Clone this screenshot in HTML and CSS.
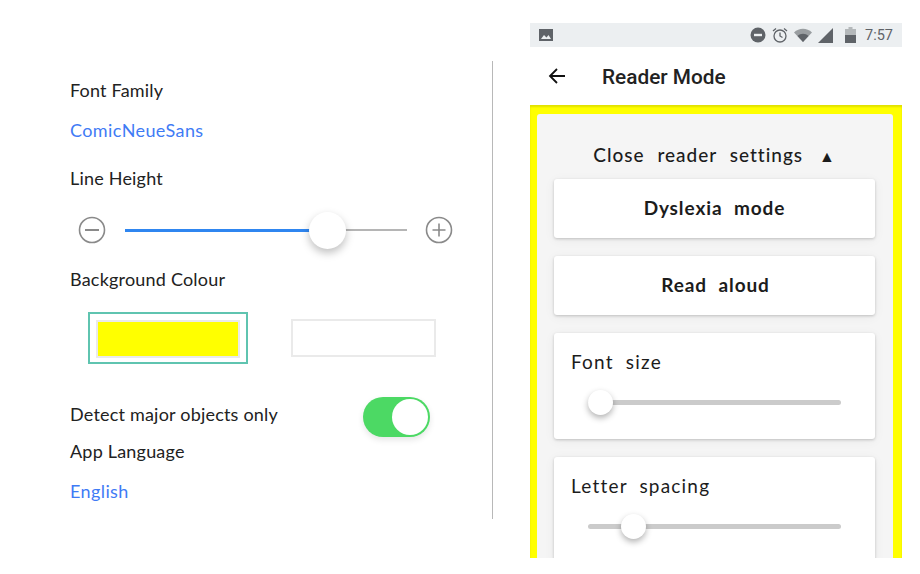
FILE: index.html
```html
<!DOCTYPE html>
<html lang="en">
<head>
    <meta charset="UTF-8">
    <meta name="viewport" content="width=device-width, initial-scale=1.0">
    <title>Reader Mode</title>
    <link rel="stylesheet" href="styles.css">
</head>
<body>

    <div class="settings">
        <div class="label row-font">Font Family</div>
        <div class="link row-font-value">ComicNeueSans</div>
        <div class="label row-line">Line Height</div>
        <div class="line-slider">
            <svg class="round-btn" width="28" height="28" viewBox="0 0 28 28"><circle cx="14" cy="14" r="12.5" fill="none" stroke="#8a8a8a" stroke-width="1.6"/><path d="M7 14h14" stroke="#8a8a8a" stroke-width="2"/></svg>
            <div class="thin-track">
                <div class="thin-fill"></div>
                <div class="thin-thumb"></div>
            </div>
            <svg class="round-btn" width="28" height="28" viewBox="0 0 28 28"><circle cx="14" cy="14" r="12.5" fill="none" stroke="#8a8a8a" stroke-width="1.6"/><path d="M7.500 14h13M14 7.500v13" stroke="#8a8a8a" stroke-width="1.600"/></svg>
        </div>
        <div class="label row-bg">Background Colour</div>
        <div class="swatches">
            <div class="swatch-active"><div class="swatch swatch-yellow"></div></div>
            <div class="swatch swatch-white"></div>
        </div>
        <div class="toggle-row">
            <div class="label">Detect major objects only</div>
            <div class="toggle"><div class="toggle-knob"></div></div>
        </div>
        <div class="label row-lang">App Language</div>
        <div class="link row-lang-value">English</div>
    </div>

    <div class="phone">
        <div class="status-bar">
            <svg width="16" height="16" viewBox="0 0 16 16"><path d="M1 2h14v12H1z" fill="#5f6368"/><path d="M3 12l3-4 2.500 2.500L10.500 8 13 12z" fill="#eceff1"/></svg>
            <div class="status-icons">
                <svg width="16" height="16" viewBox="0 0 16 16"><circle cx="8" cy="8" r="7.500" fill="#5f6368"/><path d="M4 6.800h8v2.400H4z" fill="#eceff1"/></svg>
                <svg width="16" height="16" viewBox="0 0 16 16"><circle cx="8" cy="9" r="6" fill="none" stroke="#5f6368" stroke-width="1.300"/><path d="M8 5.500V9l2.500 1.500M1 4l3-2.500M15 4l-3-2.500" fill="none" stroke="#5f6368" stroke-width="1.300"/></svg>
                <svg width="18" height="14" viewBox="0 0 18 14"><path d="M0 4.500C5 -0.500 13 -0.500 18 4.500L9 14z" fill="#9a9ea1"/><path d="M3.500 8C6.500 5 11.500 5 14.500 8L9 14z" fill="#5f6368"/></svg>
                <svg width="15" height="15" viewBox="0 0 15 15"><path d="M15 0v15H0z" fill="#5f6368"/></svg>
                <svg class="battery" width="11" height="16" viewBox="0 0 11 16"><path d="M3.500 0h4v2H11v14H0V2h3.500z" fill="#b4b8ba"/><path d="M0 8h11v8H0z" fill="#5f6368"/></svg>
                <span class="clock">7:57</span>
            </div>
        </div>
        <div class="app-bar">
            <svg width="20" height="20" viewBox="0 0 20 20"><path d="M18 10H3M10 3l-7 7 7 7" fill="none" stroke="#111" stroke-width="1.800"/></svg>
            <span class="app-title">Reader Mode</span>
        </div>
        <div class="reader-bg">
            <div class="reader-panel">
                <div class="panel-title">Close reader settings <span class="arrow">▲</span></div>
                <div class="card card-btn">Dyslexia mode</div>
                <div class="card card-btn card-read">Read aloud</div>
                <div class="card card-slider">
                    <div class="card-label">Font size</div>
                    <div class="track"><div class="thumb thumb-font"></div></div>
                </div>
                <div class="card card-slider">
                    <div class="card-label">Letter spacing</div>
                    <div class="track"><div class="thumb thumb-letter"></div></div>
                </div>
            </div>
        </div>
    </div>

</body>
</html>
```

FILE: styles.css
```css
* {
    box-sizing: border-box;
}
body {
    margin: 0;
    height: 574px;
    overflow: hidden;
    background: white;
    display: flex;
    align-items: flex-start;
    font-family: "Lato", "Open Sans", sans-serif;
    color: #222;
}

/* left panel */
.settings {
    width: 493px;
    height: 458px;
    margin-top: 61px;
    padding-left: 70px;
    padding-top: 18px;
    border-right: 1px solid #b8b8b8;
    flex-shrink: 0;
}
.label {
    font-size: 18px;
    line-height: 22px;
    letter-spacing: 0.2px;
    color: #222;
}
.link {
    font-size: 18px;
    line-height: 22px;
    letter-spacing: 0.4px;
    color: #3f7bf5;
}
.row-font-value {
    margin-top: 18px;
}
.row-line {
    margin-top: 26px;
}
.line-slider {
    display: flex;
    align-items: center;
    height: 40px;
    margin-top: 21px;
    margin-left: 8px;
    width: 375px;
}
.round-btn {
    flex-shrink: 0;
}
.thin-track {
    position: relative;
    width: 282px;
    height: 2px;
    margin: 0 18px 0 19px;
    background: #b5b5b5;
}
.thin-fill {
    width: 202px;
    height: 3px;
    background: #2f86f0;
}
.thin-thumb {
    position: absolute;
    left: 184px;
    top: -17px;
    width: 37px;
    height: 37px;
    border-radius: 50%;
    background: white;
    box-shadow: 0 4px 8px rgba(0, 0, 0, 0.25);
}
.row-bg {
    margin-top: 18px;
}
.swatches {
    display: flex;
    align-items: center;
    gap: 43px;
    margin-top: 22px;
    margin-left: 18px;
}
.swatch-active {
    width: 160px;
    height: 52px;
    padding: 6px;
    border: 2px solid #5fc4b0;
}
.swatch {
    height: 38px;
    border: 2px solid #eaeaea;
}
.swatch-yellow {
    width: 100%;
    background: #ffff00;
}
.swatch-white {
    width: 145px;
    background: white;
}
.toggle-row {
    display: flex;
    align-items: center;
    justify-content: space-between;
    width: 360px;
    height: 40px;
    margin-top: 33px;
}
.toggle-row .label {
    margin-top: -7px;
}
.toggle {
    width: 67px;
    height: 40px;
    padding: 2px;
    border-radius: 20px;
    background: #4cd964;
    box-shadow: 0 3px 6px rgba(0, 0, 0, 0.1);
    display: flex;
    justify-content: flex-end;
}
.toggle-knob {
    width: 36px;
    height: 36px;
    border-radius: 50%;
    background: white;
}
.row-lang {
    margin-top: 3px;
}
.row-lang-value {
    margin-top: 18px;
}

/* phone screenshot */
.phone {
    width: 372px;
    height: 535px;
    margin-top: 23px;
    margin-left: 37px;
    overflow: hidden;
    display: flex;
    flex-direction: column;
}
.status-bar {
    height: 24px;
    flex-shrink: 0;
    background: #eceff1;
    display: flex;
    align-items: center;
    justify-content: space-between;
    padding: 0 9px 0 8px;
}
.status-icons {
    display: flex;
    align-items: center;
    gap: 6px;
}
.battery {
    margin-left: 6px;
}
.clock {
    margin-left: 3px;
    font-family: "Roboto", sans-serif;
    font-size: 14.500px;
    color: #5f6368;
}
.app-bar {
    height: 58px;
    flex-shrink: 0;
    display: flex;
    align-items: center;
    padding-left: 17px;
    background: white;
}
.app-title {
    margin-left: 35px;
    margin-top: 2px;
    font-family: "Roboto", sans-serif;
    font-size: 20.800px;
    font-weight: 500;
    color: #222;
}
.reader-bg {
    flex: 1;
    min-height: 0;
    padding: 9px 9px 0 7px;
    background: #ffff00;
    box-shadow: inset 0 2px 2px rgba(0, 0, 0, 0.12);
}
.reader-panel {
    height: 600px;
    padding: 0 18px 0 17px;
    border-radius: 3px;
    background: #f5f5f5;
}
.panel-title {
    height: 65px;
    padding-top: 28px;
    text-align: center;
    font-size: 19px;
    font-weight: 500;
    line-height: 26px;
    letter-spacing: 1px;
    word-spacing: 7px;
    color: #1c1c1c;
}
.arrow {
    margin-left: 3px;
    font-size: 16px;
}
.card {
    background: white;
    border-radius: 3px;
    box-shadow: 0 1px 3px rgba(0, 0, 0, 0.2), 0 2px 12px rgba(0, 0, 0, 0.05);
}
.card-btn {
    height: 59px;
    margin-bottom: 18px;
    padding-bottom: 3px;
    display: flex;
    align-items: center;
    justify-content: center;
    font-size: 19px;
    font-weight: 700;
    letter-spacing: 0.9px;
    word-spacing: 6px;
    color: #1c1c1c;
}
.card-read {
    padding-left: 2px;
}
.card-slider {
    height: 106px;
    margin-bottom: 18px;
    padding: 16px 34px 0 17px;
}
.card-label {
    font-size: 19px;
    line-height: 26px;
    letter-spacing: 1.200px;
    word-spacing: 6px;
    color: #1c1c1c;
}
.track {
    position: relative;
    height: 5px;
    margin-top: 25px;
    margin-left: 17px;
    border-radius: 3px;
    background: #cbcbcb;
}
.thumb {
    position: absolute;
    top: -10px;
    width: 25px;
    height: 25px;
    border-radius: 50%;
    background: white;
    box-shadow: 0 3px 6px rgba(0, 0, 0, 0.3);
}
.thumb-font {
    left: 0;
}
.thumb-letter {
    left: 33px;
}
```
